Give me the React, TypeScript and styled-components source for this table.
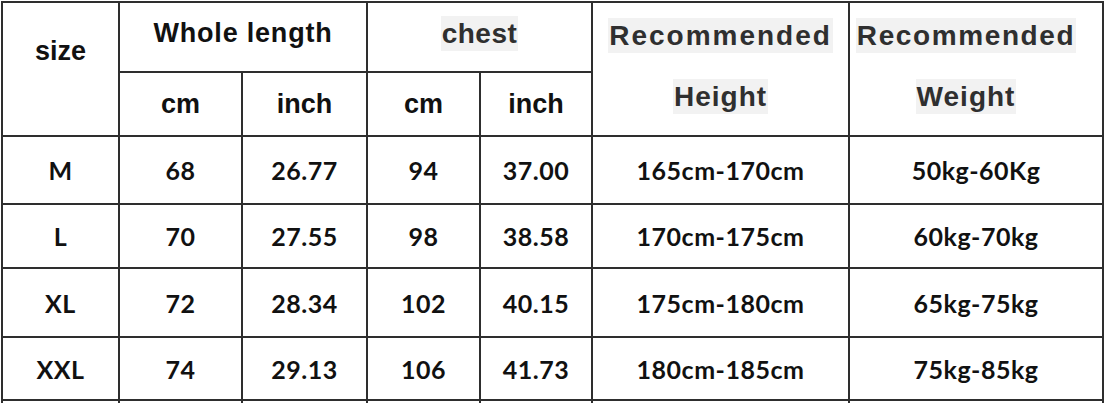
import React from "react";
import styled, { createGlobalStyle } from "styled-components";

const Global = createGlobalStyle`
  html, body { margin: 0; padding: 0; background: #fff; }
  body { width: 1105px; height: 403px; overflow: hidden; }
`;

const Table = styled.table`
  border-collapse: collapse;
  table-layout: fixed;
  width: 1103px;
  margin: 1px 0 0 1px;
  background: #fff;
`;

const Row = styled.tr<{ $h: number }>`
  height: ${(p) => p.$h}px;
`;

const HeadCell = styled.td<{ $pt?: number; $pb?: number; $pr?: number; $top?: boolean; $ls?: number }>`
  border: 2px solid #2e2e2e;
  padding: ${(p) => p.$pt ?? 0}px ${(p) => p.$pr ?? 0}px ${(p) => p.$pb ?? 0}px 0;
  vertical-align: ${(p) => (p.$top ? "top" : "middle")};
  text-align: center;
  font-family: "Liberation Sans", Arial, sans-serif;
  font-weight: 700;
  font-size: 27px;
  line-height: 27px;
  letter-spacing: ${(p) => p.$ls ?? 0}px;
  color: #111;
  white-space: nowrap;
`;

const Mark = styled.span<{ $ls?: number }>`
  display: inline-block;
  background: #f2f2f2;
  color: #2f2f2f;
  font-size: 28px;
  line-height: 35px;
  letter-spacing: ${(p) => p.$ls ?? 1}px;
  padding: 0 1px;
`;

const Stack = styled.div`
  display: flex;
  flex-direction: column;
  align-items: center;
  gap: 26px;
`;

const Cell = styled.td`
  border: 2px solid #2e2e2e;
  padding: 0;
  vertical-align: middle;
  text-align: center;
  font-family: Lato, "Open Sans", sans-serif;
  font-weight: 700;
  font-size: 25px;
  letter-spacing: 0.5px;
  color: #111;
  white-space: nowrap;
`;

const widths = [117, 123, 125, 113, 112, 257, 254];

const rows: { h: number; v: string[] }[] = [
  { h: 68, v: ["M", "68", "26.77", "94", "37.00", "165cm-170cm", "50kg-60Kg"] },
  { h: 64, v: ["L", "70", "27.55", "98", "38.58", "170cm-175cm", "60kg-70kg"] },
  { h: 69, v: ["XL", "72", "28.34", "102", "40.15", "175cm-180cm", "65kg-75kg"] },
  { h: 63, v: ["XXL", "74", "29.13", "106", "41.73", "180cm-185cm", "75kg-85kg"] },
  { h: 60, v: ["", "", "", "", "", "", ""] },
];

export default function App() {
  return (
    <>
      <Global />
      <Table>
        <colgroup>
          {widths.map((w, i) => (
            <col key={i} style={{ width: w }} />
          ))}
        </colgroup>
        <tbody>
          <Row $h={70}>
            <HeadCell rowSpan={2} $top $pt={35}>
              size
            </HeadCell>
            <HeadCell colSpan={2} $pb={7} $ls={0.8}>
              Whole length
            </HeadCell>
            <HeadCell colSpan={2} $pb={8}>
              <Mark $ls={0.5}>chest</Mark>
            </HeadCell>
            <HeadCell rowSpan={2} $top $pt={15}>
              <Stack>
                <Mark $ls={2}>Recommended</Mark>
                <Mark $ls={1}>Height</Mark>
              </Stack>
            </HeadCell>
            <HeadCell rowSpan={2} $top $pt={15} $pr={20}>
              <Stack>
                <Mark $ls={1.6}>Recommended</Mark>
                <Mark $ls={1}>Weight</Mark>
              </Stack>
            </HeadCell>
          </Row>
          <Row $h={64}>
            <HeadCell>cm</HeadCell>
            <HeadCell>inch</HeadCell>
            <HeadCell>cm</HeadCell>
            <HeadCell>inch</HeadCell>
          </Row>
          {rows.map((r, i) => (
            <Row key={i} $h={r.h}>
              {r.v.map((c, j) => (
                <Cell key={j}>{c}</Cell>
              ))}
            </Row>
          ))}
        </tbody>
      </Table>
    </>
  );
}
